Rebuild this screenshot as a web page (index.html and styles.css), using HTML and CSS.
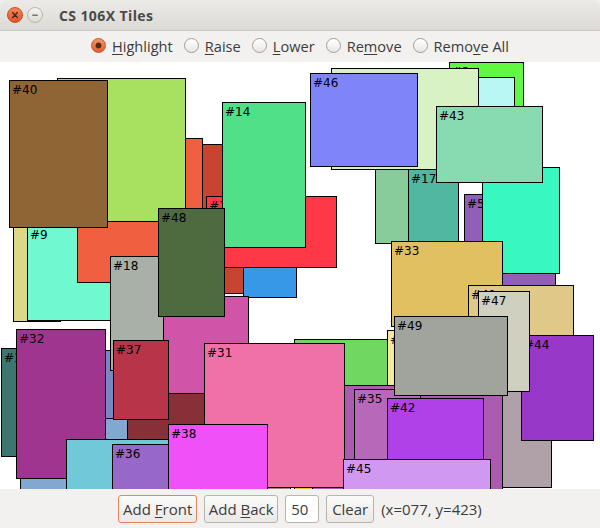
FILE: index.html
```html
<!DOCTYPE html>
<html>
<head>
<meta charset="utf-8">
<title>CS 106X Tiles</title>
<link rel="stylesheet" href="styles.css">
</head>
<body>
<div class="window">
  <div class="titlebar">
    <span class="wbtn close">
      <svg width="16" height="16" viewBox="0 0 16 16"><defs><linearGradient id="cg" x1="0" y1="0" x2="0" y2="1"><stop offset="0" stop-color="#f7875c"/><stop offset="1" stop-color="#e0542a"/></linearGradient></defs><circle cx="8" cy="8" r="7.5" fill="url(#cg)" stroke="#c2502a" stroke-width="1"/><path d="M5.6 5.6 L10.4 10.4 M10.4 5.6 L5.6 10.4" stroke="#4a2a1e" stroke-width="1.4" stroke-linecap="round"/></svg>
    </span>
    <span class="wbtn min">
      <svg width="16" height="16" viewBox="0 0 16 16"><defs><linearGradient id="mg" x1="0" y1="0" x2="0" y2="1"><stop offset="0" stop-color="#f6f5f3"/><stop offset="1" stop-color="#dcd9d4"/></linearGradient></defs><circle cx="8" cy="8" r="7.5" fill="url(#mg)" stroke="#b9b5af" stroke-width="1"/><path d="M5.2 8.2 H10.8" stroke="#5c5a56" stroke-width="1.2"/></svg>
    </span>
    <span class="title">CS 106X Tiles</span>
  </div>

  <div class="modes">
    <label class="radio"><span class="dot on"></span><span><u>H</u>ighlight</span></label>
    <label class="radio"><span class="dot"></span><span><u>R</u>aise</span></label>
    <label class="radio"><span class="dot"></span><span><u>L</u>ower</span></label>
    <label class="radio"><span class="dot"></span><span>Re<u>m</u>ove</span></label>
    <label class="radio"><span class="dot"></span><span>Remo<u>v</u>e All</span></label>
  </div>

  <div class="canvas">
    <div class="tile" style="left:13px;top:88px;width:48px;height:172px;background:#dcd888"></div>
    <div class="tile" style="left:27px;top:163px;width:84px;height:96px;background:#70f8d0">#9</div>
    <div class="tile" style="left:190px;top:82px;width:55px;height:150px;background:#c84430"></div>
    <div class="tile" style="left:77px;top:76px;width:126px;height:145px;background:#f06040"></div>
    <div class="tile" style="left:57px;top:16px;width:129px;height:144px;background:#a8e060"></div>
    <div class="tile" style="left:9px;top:18px;width:99px;height:148px;background:#8f6535">#40</div>
    <div class="tile" style="left:243px;top:193px;width:54px;height:43px;background:#3898e8"></div>
    <div class="tile" style="left:206px;top:134px;width:131px;height:72px;background:#ff3848">#19</div>
    <div class="tile" style="left:222px;top:40px;width:84px;height:146px;background:#50e088">#14</div>
    <div class="tile" style="left:20px;top:338px;width:108px;height:121px;background:#80a8d0"></div>
    <div class="tile" style="left:60px;top:288px;width:66px;height:69px;background:#7888c0"></div>
    <div class="tile" style="left:110px;top:194px;width:59px;height:115px;background:#a8b0a8">#18</div>
    <div class="tile" style="left:163px;top:234px;width:86px;height:115px;background:#d055a8"></div>
    <div class="tile" style="left:158px;top:146px;width:67px;height:109px;background:#4e6b40">#48</div>
    <div class="tile" style="left:127px;top:331px;width:84px;height:47px;background:#883038"></div>
    <div class="tile" style="left:113px;top:278px;width:56px;height:80px;background:#b83448">#37</div>
    <div class="tile" style="left:1px;top:286px;width:40px;height:109px;background:#3d7570">#15</div>
    <div class="tile" style="left:16px;top:267px;width:90px;height:150px;background:#a03590">#32</div>
    <div class="tile" style="left:66px;top:377px;width:135px;height:82px;background:#70c8d8"></div>
    <div class="tile" style="left:112px;top:382px;width:57px;height:77px;background:#9868c8">#36</div>
    <div class="tile" style="left:262px;top:408px;width:29px;height:51px;background:#a08880"></div>
    <div class="tile" style="left:294px;top:408px;width:20px;height:51px;background:#e8c040"></div>
    <div class="tile" style="left:294px;top:277px;width:94px;height:57px;background:#70d860"></div>
    <div class="tile" style="left:387px;top:268px;width:54px;height:61px;background:#f8e8a0">#39</div>
    <div class="tile" style="left:312px;top:323px;width:191px;height:136px;background:#ac5cb0"></div>
    <div class="tile" style="left:204px;top:281px;width:141px;height:145px;background:#f070a8">#31</div>
    <div class="tile" style="left:168px;top:362px;width:100px;height:97px;background:#f050f8">#38</div>
    <div class="tile" style="left:354px;top:327px;width:67px;height:132px;background:#b868b8">#35</div>
    <div class="tile" style="left:387px;top:336px;width:97px;height:123px;background:#b040e8">#42</div>
    <div class="tile" style="left:343px;top:397px;width:148px;height:62px;background:#d098f0">#45</div>
    <div class="tile" style="left:375px;top:88px;width:46px;height:94px;background:#88cc9c"></div>
    <div class="tile" style="left:449px;top:0px;width:75px;height:89px;background:#60f840">#2</div>
    <div class="tile" style="left:470px;top:15px;width:45px;height:74px;background:#b8f8f4"></div>
    <div class="tile" style="left:331px;top:6px;width:148px;height:102px;background:#d8f2c4"></div>
    <div class="tile" style="left:310px;top:11px;width:108px;height:94px;background:#7f85f8">#46</div>
    <div class="tile" style="left:408px;top:107px;width:51px;height:92px;background:#50b8a0">#17</div>
    <div class="tile" style="left:464px;top:132px;width:92px;height:92px;background:#9060b8">#5</div>
    <div class="tile" style="left:482px;top:105px;width:78px;height:107px;background:#38f8c0"></div>
    <div class="tile" style="left:436px;top:44px;width:107px;height:77px;background:#88dab0">#43</div>
    <div class="tile" style="left:391px;top:179px;width:112px;height:86px;background:#e0c060">#33</div>
    <div class="tile" style="left:468px;top:223px;width:106px;height:96px;background:#e0c888">#41</div>
    <div class="tile" style="left:502px;top:323px;width:50px;height:103px;background:#b0a0a8"></div>
    <div class="tile" style="left:521px;top:273px;width:73px;height:106px;background:#9838c8">#44</div>
    <div class="tile" style="left:478px;top:229px;width:52px;height:101px;background:#d0d0c0">#47</div>
    <div class="tile" style="left:394px;top:254px;width:114px;height:80px;background:#a0a49c">#49</div>
  </div>

  <div class="controls">
    <button class="btn btn-focus">Add <u>F</u>ront</button>
    <button class="btn btn-back">Add <u>B</u>ack</button>
    <input class="count" type="text" value="50">
    <button class="btn btn-clear">Clear</button>
    <span class="coords">(x=077, y=423)</span>
  </div>
</div>
</body>
</html>
```

FILE: styles.css
```css
html, body {
  margin: 0;
  padding: 0;
  background: #f2f1f0;
}

.window {
  width: 600px;
  height: 528px;
  display: flex;
  flex-direction: column;
  font-family: "Open Sans", "DejaVu Sans", sans-serif;
  color: #3c3c3c;
  overflow: hidden;
}

.titlebar {
  flex: none;
  height: 31px;
  box-sizing: border-box;
  display: flex;
  align-items: center;
  gap: 4px;
  padding: 0 0 0 7px;
  background: linear-gradient(#eceae7, #dddad5);
  border-bottom: 1px solid #cbc8c3;
  border-radius: 6px 6px 0 0;
}

.wbtn {
  display: block;
  width: 16px;
  height: 16px;
}

.wbtn svg {
  display: block;
}

.title {
  margin-left: 12px;
  font-weight: 700;
  font-size: 14px;
  letter-spacing: 0.4px;
  color: #4b4a47;
}

.modes {
  flex: none;
  height: 31px;
  box-sizing: border-box;
  padding-bottom: 2px;
  display: flex;
  align-items: center;
  justify-content: center;
  gap: 11px;
  font-size: 14.6px;
}

.radio {
  display: flex;
  align-items: center;
  gap: 6px;
}

.dot {
  display: block;
  width: 15px;
  height: 15px;
  box-sizing: border-box;
  border-radius: 50%;
  border: 1px solid #a29e98;
  background: linear-gradient(#ffffff, #e9e7e4);
}

.dot.on {
  border-color: #c65529;
  background: radial-gradient(circle, #5a2713 0, #5a2713 2.6px, rgba(0,0,0,0) 3.3px),
              linear-gradient(#f49467, #e25d2c);
}

u {
  text-decoration: underline;
  text-underline-offset: 2px;
}

.canvas {
  flex: none;
  position: relative;
  height: 427px;
  background: #ffffff;
  overflow: hidden;
}

.tile {
  position: absolute;
  box-sizing: border-box;
  border: 1px solid #000;
  padding: 2px 0 0 2px;
  font-family: "DejaVu Sans", sans-serif;
  font-size: 12px;
  line-height: 14px;
  color: #000;
  white-space: nowrap;
  overflow: hidden;
}

.controls {
  flex: none;
  height: 39px;
  display: flex;
  align-items: center;
  justify-content: center;
  gap: 7px;
  font-size: 15px;
}

.btn {
  height: 28px;
  box-sizing: border-box;
  padding: 0;
  border: 1px solid #b8b4ae;
  border-radius: 3px;
  background: linear-gradient(#fbfbfa, #ebe9e6);
  font-family: inherit;
  font-size: 15px;
  color: #3c3c3c;
}

.btn-focus {
  width: 79px;
  border-color: #e8845b;
}

.btn-back {
  width: 74px;
}

.btn-clear {
  width: 48px;
}

.count {
  width: 34px;
  height: 28px;
  box-sizing: border-box;
  padding: 0 0 0 5px;
  border: 1px solid #b8b4ae;
  border-radius: 3px;
  background: #fff;
  font-family: inherit;
  font-size: 15px;
  color: #3c3c3c;
}

.coords {
  white-space: nowrap;
}
```
